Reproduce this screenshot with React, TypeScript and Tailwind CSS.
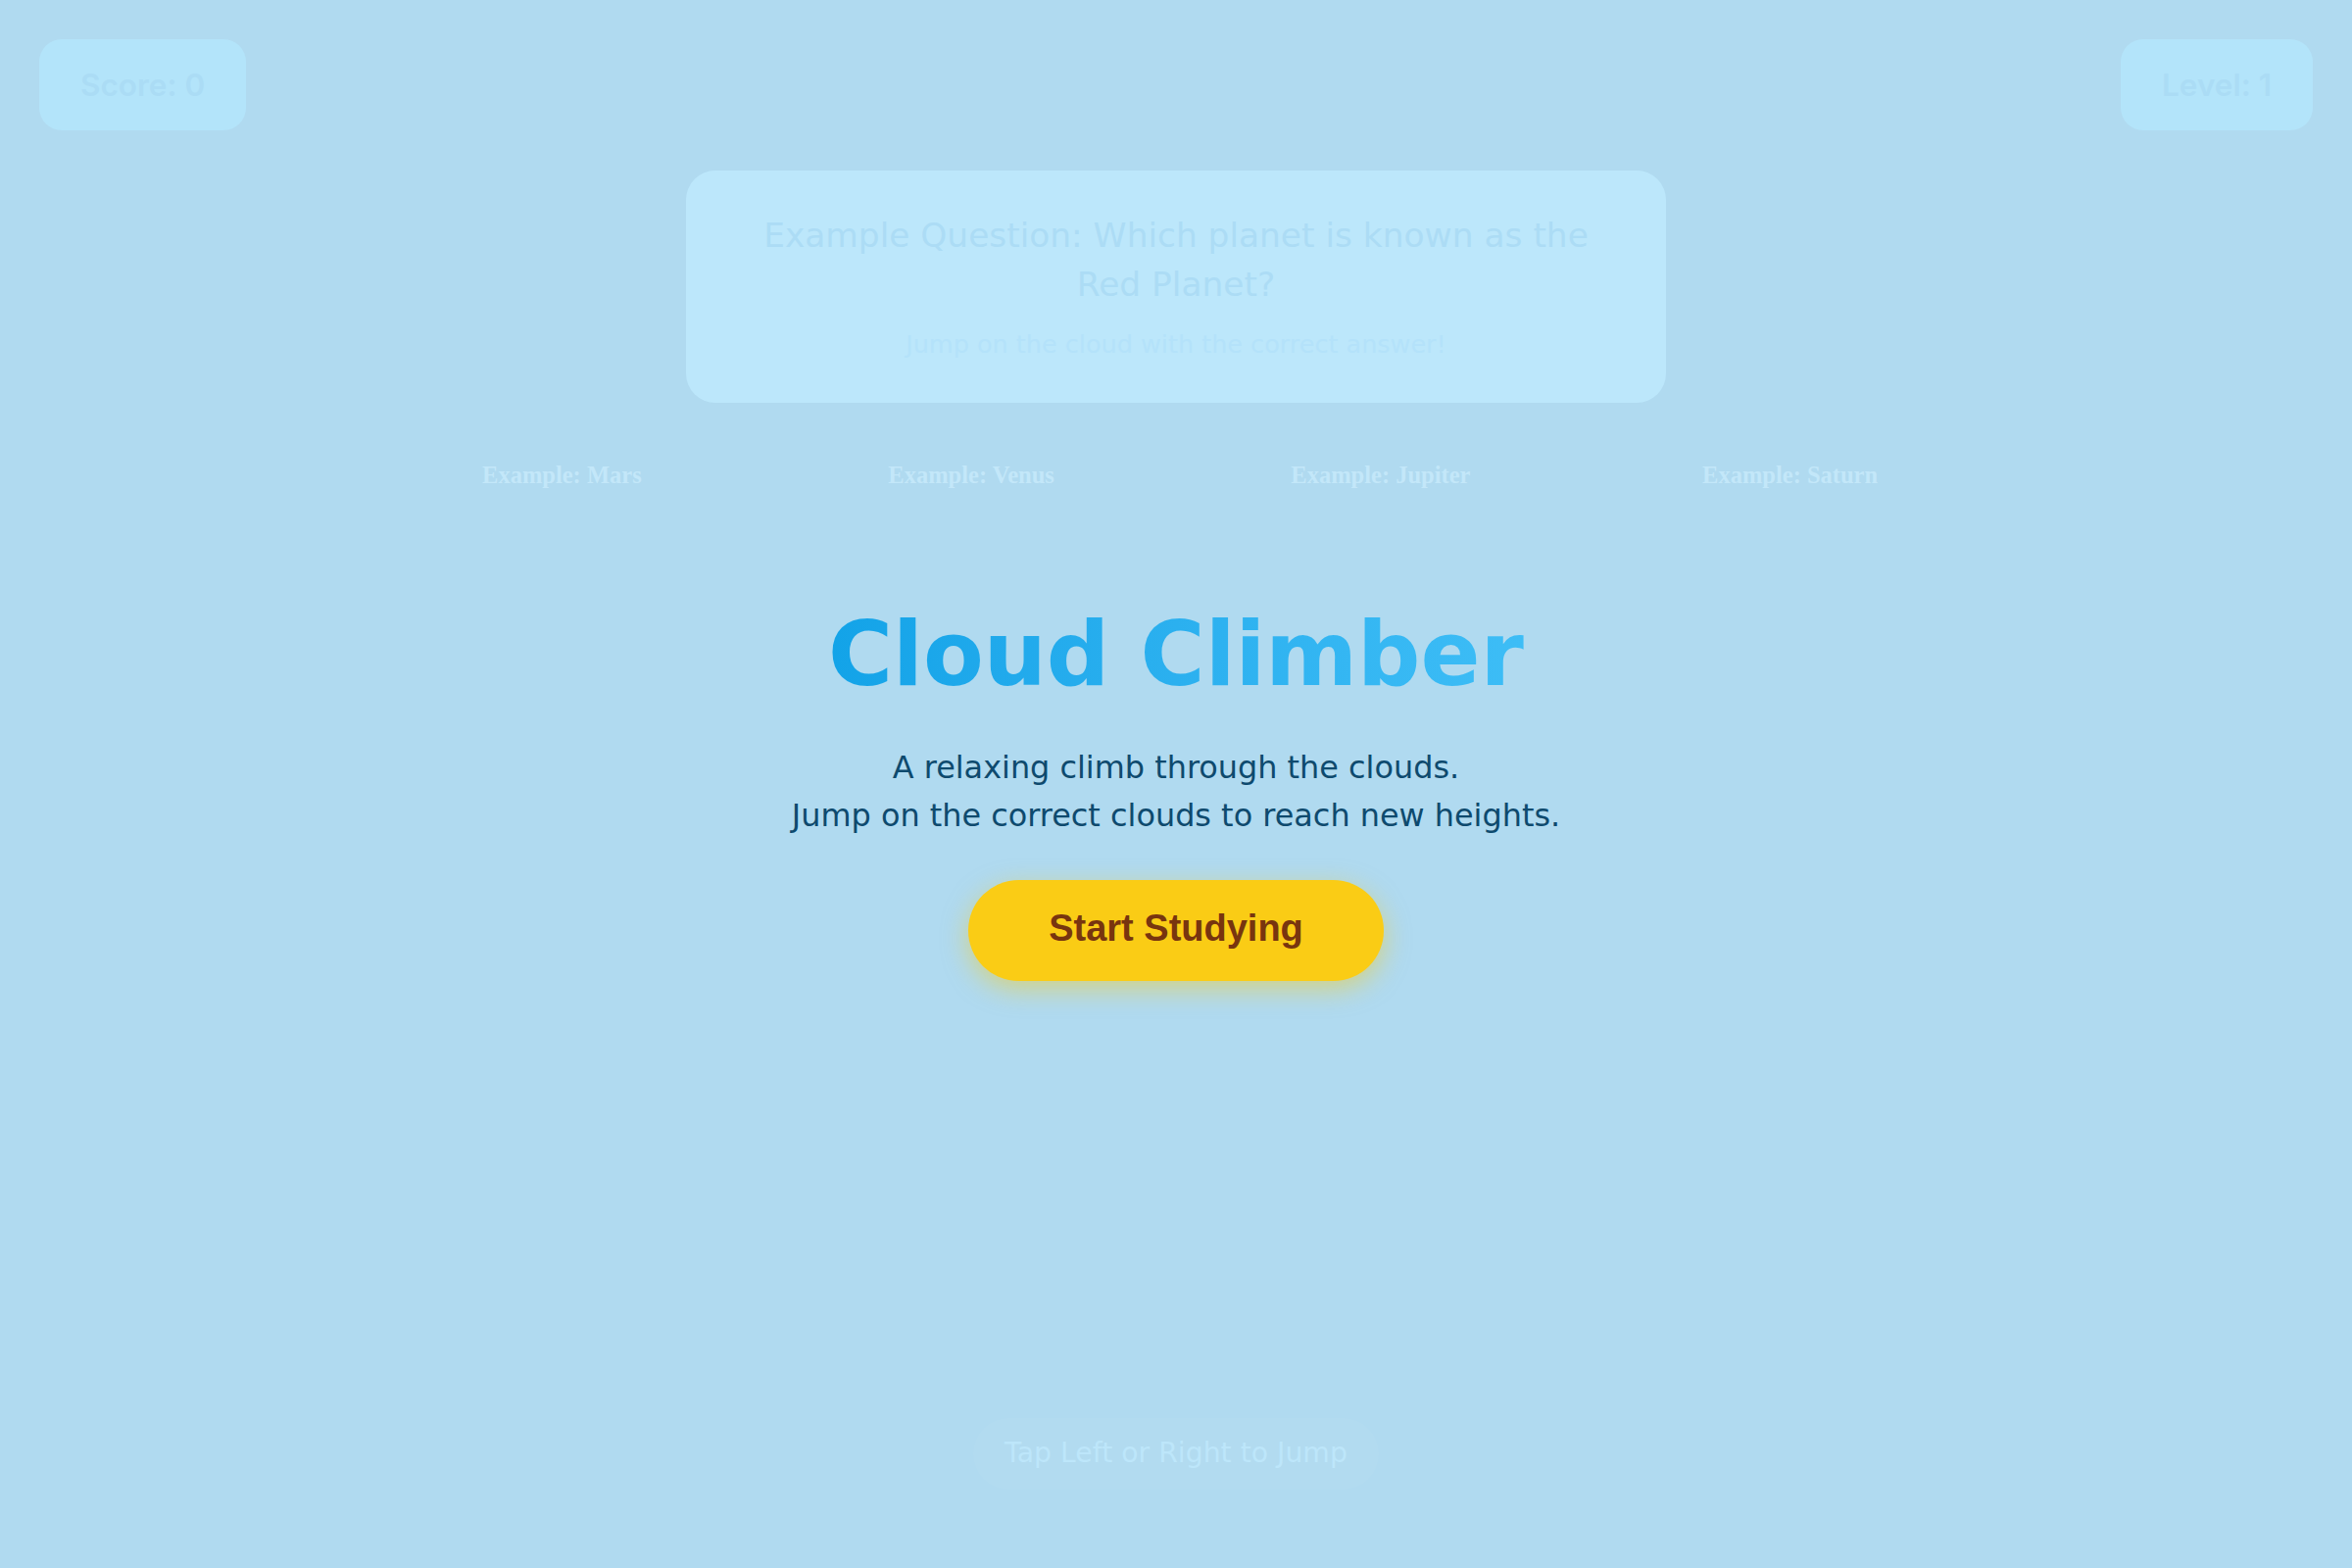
import React from "react";

export default function App() {
  const answers = ["Example: Mars", "Example: Venus", "Example: Jupiter", "Example: Saturn"];
  return (
    <div className="min-h-screen w-full bg-[#b0daf0] flex flex-col items-center font-['DejaVu_Sans',sans-serif]">
      {/* HUD */}
      <div className="w-full flex justify-between px-[40px] pt-[40px]">
        <div className="h-[93px] px-[42px] flex items-center rounded-[23px] bg-[#b3e4fa]">
          <span className="font-['Inter',sans-serif] font-semibold text-[31.5px] leading-none text-[#abdcf5]">Score: 0</span>
        </div>
        <div className="h-[93px] px-[42px] flex items-center rounded-[23px] bg-[#b3e4fa]">
          <span className="font-['Inter',sans-serif] font-semibold text-[31.5px] leading-none text-[#abdcf5]">Level: 1</span>
        </div>
      </div>

      {/* Question card */}
      <div className="mt-[41px] w-[1000px] h-[237px] rounded-[30px] bg-[#bce7fb] px-[60px] pt-[41px] text-center">
        <p className="text-[34.4px] leading-[50px] text-[#acdcf5]">
          Example Question: Which planet is known as the Red Planet?
        </p>
        <p className="mt-[18px] text-[25.5px] leading-[36px] text-[#b4e2fa]">
          Jump on the cloud with the correct answer!
        </p>
      </div>

      {/* Answers */}
      <div className="mt-[60px] w-[1671px] grid grid-cols-4">
        {answers.map((a) => (
          <div
            key={a}
            className="text-center font-['Liberation_Serif',serif] font-bold text-[24.5px] leading-[28px] text-[#c3e7f9]"
          >
            {a}
          </div>
        ))}
      </div>

      {/* Title block */}
      <h1 className="mt-[124px] inline-block font-bold text-[90px] leading-none bg-linear-to-r from-[#12a3e8] to-[#3dbdf6] bg-clip-text text-transparent">
        Cloud Climber
      </h1>
      <p className="mt-[46px] text-center text-[31.9px] leading-[49px] text-[#0e4a6e]">
        A relaxing climb through the clouds.
        <br />
        Jump on the correct clouds to reach new heights.
      </p>
      <button className="mt-[41px] h-[103px] px-[82px] pb-[6px] inline-flex items-center rounded-full bg-[#facc15] shadow-[0_8px_26px_rgba(250,204,21,0.5)] font-['Liberation_Sans',Arial,sans-serif] font-bold text-[38px] leading-none text-[#78350f]">
        Start Studying
      </button>

      <div className="flex-1" />

      {/* Bottom hint */}
      <div className="mb-[80px] h-[73px] px-[32px] flex items-center rounded-full bg-white/[0.03]">
        <span className="text-[28.3px] leading-none text-[#bde6fa]">Tap Left or Right to Jump</span>
      </div>
    </div>
  );
}
